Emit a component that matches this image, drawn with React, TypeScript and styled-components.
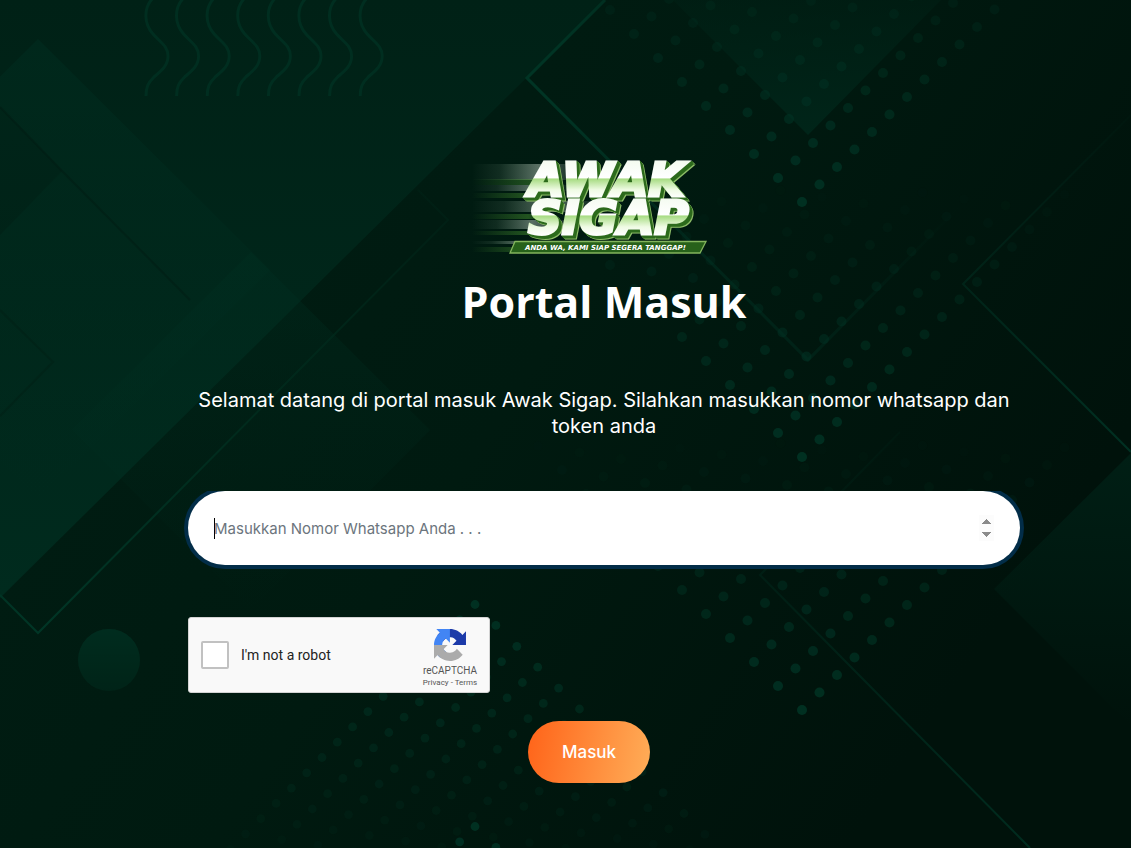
import React from "react";
import styled, { createGlobalStyle } from "styled-components";

const GlobalStyle = createGlobalStyle`
  *, *::before, *::after { box-sizing: border-box; }
  body {
    margin: 0;
    background: #00170f;
    color: #fff;
    font-family: Inter, "Open Sans", sans-serif;
  }
`;

const Page = styled.main`
  position: relative;
  display: grid;
  grid-template-columns: 188fr minmax(304px, 832fr) 111fr;
  min-height: 100vh;
  overflow: hidden;
`;

const Backdrop = styled.svg`
  position: absolute;
  inset: 0;
  width: 100%;
  height: 100%;
`;

const Content = styled.div`
  position: relative;
  grid-column: 2;
  display: flex;
  flex-direction: column;
  padding: 160px 0 64px;
`;

const Logo = styled.svg`
  align-self: center;
  width: 272px;
  height: 96px;
  overflow: visible;
`;

const Title = styled.h1`
  margin: 16px 0 55px;
  font-family: "Open Sans", sans-serif;
  font-size: 43px;
  font-weight: 700;
  line-height: 60px;
  text-align: center;
`;

const Intro = styled.p`
  margin: 0 0 52px;
  font-size: 20px;
  font-weight: 420;
  line-height: 26px;
  text-align: center;
`;

const Form = styled.form`
  display: flex;
  flex-direction: column;
  align-items: flex-start;
`;

const PhoneInput = styled.input`
  width: 100%;
  height: 74px;
  margin-bottom: 52px;
  padding: 0 26px;
  border: 0;
  border-radius: 37px;
  outline: 0;
  background: #fff;
  color: #212529;
  caret-color: #000;
  box-shadow: 0 0 0 4px #022d48;
  clip-path: inset(0 -4px -4px -4px);
  font: 400 15px/24px Inter, "Open Sans", sans-serif;

  &::placeholder { color: #6c757d; opacity: 1; }
  &::-webkit-inner-spin-button { opacity: 1; height: 26px; }

  /* steady caret while the field is empty */
  &:placeholder-shown {
    caret-color: transparent;
    background: linear-gradient(#000, #000) 26px 50% / 1px 21px no-repeat,
      linear-gradient(#efefef, #efefef) calc(100% - 26px) 50% / 15px 26px no-repeat, #fff;
  }
`;

const Captcha = styled.div`
  display: flex;
  align-items: center;
  width: 302px;
  height: 76px;
  margin-bottom: 28px;
  padding: 0 10px 0 12px;
  border: 1px solid #d3d3d3;
  border-radius: 3px;
  background: #f9f9f9;
  color: #222;
  font-family: Roboto, sans-serif;
`;

const CaptchaLabel = styled.label`
  display: flex;
  align-items: center;
  gap: 12px;
  flex: 1;
  font-size: 14px;
  line-height: 17px;
`;

const CaptchaBox = styled.input`
  appearance: none;
  width: 28px;
  height: 28px;
  margin: 0;
  border: 2px solid #c1c1c1;
  border-radius: 2px;
  background: #fff;
`;

const Brand = styled.div`
  display: flex;
  flex-direction: column;
  align-items: center;
  width: 58px;
  padding-top: 8px;
  color: #555;
  font-size: 10px;
  line-height: 12px;
`;

const BrandIcon = styled.svg`
  width: 32px;
  height: 32px;
  margin-bottom: 4px;
`;

const Legal = styled.div`
  font-size: 8px;
  line-height: 12px;
  white-space: nowrap;
`;

const LegalLink = styled.a`
  color: #555;
  text-decoration: none;
`;

const Actions = styled.div`
  display: flex;
  justify-content: center;
  width: 100%;
  padding-right: 30px;
`;

const Submit = styled.button`
  width: 122px;
  height: 62px;
  border: 0;
  border-radius: 31px;
  background: linear-gradient(100deg, #ff671c 5%, #ffaa55 95%);
  color: #fff;
  font: 500 17px/26px Inter, "Open Sans", sans-serif;
`;

type Lattice = { x: number; y: number; dir: 1 | -1; a: number; b: number };

const lattices: Lattice[] = [
  { x: 802, y: 202, dir: -1, a: 17.5, b: 24 },
  { x: 802, y: 457, dir: -1, a: 17.5, b: 24 },
  { x: 802, y: 710, dir: -1, a: 17.5, b: 24 },
  { x: 475, y: 604.5, dir: 1, a: 20.9, b: 15.3 },
  { x: 475, y: 826.5, dir: 1, a: 20.9, b: 15.3 },
];

/* Dots spread from a tip along two diagonals and fade with vertical distance. */
function Dots({ x, y, dir, a, b }: Lattice) {
  const dots: React.ReactNode[] = [];
  for (let i = 0; i < 18; i++) {
    for (let j = 0; j < 18; j++) {
      const rise = i * a + j * b;
      const opacity = 0.9 - rise / 310;
      if (opacity <= 0.04) continue;
      dots.push(
        <circle key={`${i}-${j}`} cx={x + i * a - j * b} cy={y + dir * rise} r={dir < 0 ? 5 : 4.4} opacity={opacity} />
      );
    }
  }
  return <g fill="#003324">{dots}</g>;
}

function Background() {
  return (
    <Backdrop viewBox="0 0 1131 848" preserveAspectRatio="xMidYMid slice" aria-hidden="true">
      <defs>
        <linearGradient id="base" x1="0" y1="0" x2="1" y2="0.5">
          <stop offset="0" stopColor="#001e14" />
          <stop offset="0.55" stopColor="#001a10" />
          <stop offset="1" stopColor="#00120b" />
        </linearGradient>
        <linearGradient id="band" x1="0" y1="0" x2="0" y2="1">
          <stop offset="0" stopColor="#002116" />
          <stop offset="0.5" stopColor="#00261a" />
          <stop offset="1" stopColor="#002b1e" />
        </linearGradient>
        <linearGradient id="fade" x1="0" y1="0" x2="0" y2="1">
          <stop offset="0" stopColor="#003022" stopOpacity="0.85" />
          <stop offset="1" stopColor="#003022" stopOpacity="0" />
        </linearGradient>
        <linearGradient id="rise" x1="0" y1="1" x2="0" y2="0">
          <stop offset="0" stopColor="#002519" />
          <stop offset="1" stopColor="#002519" stopOpacity="0.3" />
        </linearGradient>
        <linearGradient id="line" gradientUnits="userSpaceOnUse" x1="0" y1="200" x2="0" y2="640">
          <stop offset="0" stopColor="#002a1c" stopOpacity="0.25" />
          <stop offset="0.5" stopColor="#002a1c" />
          <stop offset="1" stopColor="#003626" />
        </linearGradient>
        <linearGradient id="chevron" gradientUnits="userSpaceOnUse" x1="560" y1="0" x2="960" y2="0">
          <stop offset="0" stopColor="#003424" />
          <stop offset="0.3" stopColor="#00261a" />
          <stop offset="0.6" stopColor="#002217" />
          <stop offset="1" stopColor="#002217" stopOpacity="0" />
        </linearGradient>
        <linearGradient id="lineRight" gradientUnits="userSpaceOnUse" x1="0" y1="110" x2="0" y2="452">
          <stop offset="0" stopColor="#00261a" stopOpacity="0.1" />
          <stop offset="0.6" stopColor="#00261a" />
          <stop offset="1" stopColor="#003022" />
        </linearGradient>
        <linearGradient id="lineLow" gradientUnits="userSpaceOnUse" x1="0" y1="430" x2="0" y2="848">
          <stop offset="0" stopColor="#00261a" stopOpacity="0.2" />
          <stop offset="1" stopColor="#002c1f" />
        </linearGradient>
      </defs>
      <rect width="1131" height="848" fill="url(#base)" />
      <path d="M0 0H605L0 598Z" fill="url(#band)" />
      <path d="M0 107L62 171L0 235Z" fill="#001c12" opacity="0.7" />
      <path d="M38 39L270 270L38 500L-194 270Z" fill="url(#fade)" opacity="0.5" />
      <path d="M0 107L62 171L190 300" fill="none" stroke="#001a11" strokeWidth="2" opacity="0.4" />
      <path d="M0 310L53 362L0 416" fill="none" stroke="#001f14" strokeWidth="2" opacity="0.4" />
      <path d="M251 252L430 430L251 610L72 430Z" fill="url(#fade)" opacity="0.4" />
      <path d="M0 595L38 633L448 220L418 190" fill="none" stroke="url(#line)" strokeWidth="2" />
      <circle cx="109" cy="660" r="31" fill="url(#fade)" />
      <circle cx="109" cy="660" r="31" fill="#002b1e" opacity="0.5" />
      <path d="M673 0L808 135L941 0Z" fill="url(#rise)" />
      <path d="M605 0L527 78L808 360L960 206" fill="none" stroke="url(#chevron)" strokeWidth="3" />
      <path d="M1131 115L963 284L1131 452" fill="none" stroke="url(#lineRight)" strokeWidth="2" />
      <path d="M1131 453L994 589L1131 726Z" fill="url(#fade)" opacity="0.5" />
      <path d="M900 432L760 575L1030 848" fill="none" stroke="url(#lineLow)" strokeWidth="2" />
      <g fill="none" stroke="#002e20" strokeWidth="3">
        {Array.from({ length: 8 }, (_, i) => (
          <path
            key={i}
            transform={`translate(${i * 30.6} 0)`}
            d="M153 -2C143 8 144 24 153 34C160 42 168 46 168 56C168 66 161 71 154 77C148 83 146 87 146 96"
          />
        ))}
      </g>
      {lattices.map((l, i) => (
        <Dots key={i} {...l} />
      ))}
    </Backdrop>
  );
}

const LogoWord = styled.text`
  font: italic 700 47px "DejaVu Sans", sans-serif;
  fill: url(#chrome);
  stroke: url(#chrome);
  stroke-width: 3px;
  filter: drop-shadow(1px 1px 0 #2c6a1c) drop-shadow(1px 1px 0 #2c6a1c) drop-shadow(1px 1px 0 #2c6a1c)
    drop-shadow(1px 1px 0 #8dbd68);
`;

const LogoTagline = styled.text`
  font: italic 700 7px "DejaVu Sans", sans-serif;
  fill: #fff;
`;

const streaks = [
  { y: 4, h: 16, w: 110, fill: "url(#speed)" },
  { y: 19, h: 6, w: 90, fill: "url(#speedGreen)" },
  { y: 25, h: 6, w: 100, fill: "url(#speed)" },
  { y: 33, h: 5, w: 80, fill: "url(#speedGreen)" },
  { y: 41, h: 11, w: 130, fill: "url(#speed)" },
  { y: 54, h: 5, w: 80, fill: "url(#speedGreen)" },
  { y: 60, h: 9, w: 100, fill: "url(#speed)" },
  { y: 71, h: 4, w: 80, fill: "url(#speedGreen)" },
  { y: 81, h: 3, w: 80, fill: "url(#speed)" },
  { y: 87, h: 5, w: 80, fill: "url(#speedGreen)" },
];

function AwakSigapLogo() {
  return (
    <Logo viewBox="0 0 272 96" role="img" aria-label="Awak Sigap">
      <defs>
        <linearGradient id="speed" x1="0" y1="0" x2="1" y2="0">
          <stop offset="0" stopColor="#8fae96" stopOpacity="0" />
          <stop offset="0.25" stopColor="#8fae96" stopOpacity="0.12" />
          <stop offset="0.6" stopColor="#a3b5a8" stopOpacity="0.55" />
          <stop offset="1" stopColor="#a3b5a8" stopOpacity="0" />
        </linearGradient>
        <linearGradient id="speedGreen" x1="0" y1="0" x2="1" y2="0">
          <stop offset="0" stopColor="#4c9a32" stopOpacity="0" />
          <stop offset="0.7" stopColor="#4c9a32" stopOpacity="0.45" />
          <stop offset="1" stopColor="#4c9a32" stopOpacity="0" />
        </linearGradient>
        <linearGradient id="chrome" gradientUnits="userSpaceOnUse" x1="0" y1="1" x2="0" y2="38" spreadMethod="repeat">
          <stop offset="0" stopColor="#f4fbf0" />
          <stop offset="0.45" stopColor="#ffffff" />
          <stop offset="0.49" stopColor="#a8dc84" />
          <stop offset="0.78" stopColor="#effbe4" />
          <stop offset="1" stopColor="#ffffff" />
        </linearGradient>
      </defs>
      {streaks.map((s) => (
        <rect key={s.y} x="4" y={s.y} width={s.w} height={s.h} fill={s.fill} />
      ))}
      <LogoWord x="60" y="36">AWAK</LogoWord>
      <LogoWord x="60" y="74">SIGAP</LogoWord>
      <path d="M47 81.500H238L232 93H42Z" fill="#27611a" stroke="#82b45c" strokeWidth="1.300" />
      <LogoTagline x="57" y="90">ANDA WA, KAMI SIAP SEGERA TANGGAP!</LogoTagline>
    </Logo>
  );
}

function RecaptchaIcon() {
  return (
    <BrandIcon viewBox="0 0 64 64" aria-hidden="true">
      <path fill="#1c3aa9" d="M64 31.955l-.033-1.37V4.687l-7.16 7.16C50.948 4.674 42.033.093 32.05.093c-10.4 0-19.622 4.96-25.458 12.64l11.736 11.86a15.55 15.55 0 0 1 4.754-5.334c2.05-1.6 4.952-2.906 8.968-2.906.485 0 .86.057 1.135.163 4.976.393 9.288 3.14 11.828 7.124l-8.307 8.307L64 31.953" />
      <path fill="#4285f4" d="M31.862.094l-1.37.033H4.594l7.16 7.16C4.58 13.147 0 22.06 0 32.046c0 10.4 4.96 19.622 12.64 25.458L24.5 45.768a15.55 15.55 0 0 1-5.334-4.754c-1.6-2.05-2.906-4.952-2.906-8.968 0-.485.057-.86.163-1.135.393-4.976 3.14-9.288 7.124-11.828l8.307 8.307L31.86.095" />
      <path fill="#ababab" d="M.001 32.045l.033 1.37v25.898l7.16-7.16c5.86 7.173 14.774 11.754 24.76 11.754 10.4 0 19.622-4.96 25.458-12.64l-11.736-11.86a15.55 15.55 0 0 1-4.754 5.334c-2.05 1.6-4.952 2.906-8.968 2.906-.485 0-.86-.057-1.135-.163-4.976-.393-9.288-3.14-11.828-7.124l8.307-8.307c-10.522.04-22.4.066-27.295-.005" />
    </BrandIcon>
  );
}

export default function App() {
  return (
    <Page>
      <GlobalStyle />
      <Background />
      <Content>
        <AwakSigapLogo />
        <Title>Portal Masuk</Title>
        <Intro>
          Selamat datang di portal masuk Awak Sigap. Silahkan masukkan nomor whatsapp dan token anda
        </Intro>
        <Form onSubmit={(e) => e.preventDefault()}>
          <PhoneInput
            type="number"
            autoFocus
            aria-label="Nomor Whatsapp"
            placeholder="Masukkan Nomor Whatsapp Anda . . ."
          />
          <Captcha>
            <CaptchaLabel>
              <CaptchaBox type="checkbox" />
              I'm not a robot
            </CaptchaLabel>
            <Brand>
              <RecaptchaIcon />
              reCAPTCHA
              <Legal>
                <LegalLink href="#privacy">Privacy</LegalLink> - <LegalLink href="#terms">Terms</LegalLink>
              </Legal>
            </Brand>
          </Captcha>
          <Actions>
            <Submit type="submit">Masuk</Submit>
          </Actions>
        </Form>
      </Content>
    </Page>
  );
}
